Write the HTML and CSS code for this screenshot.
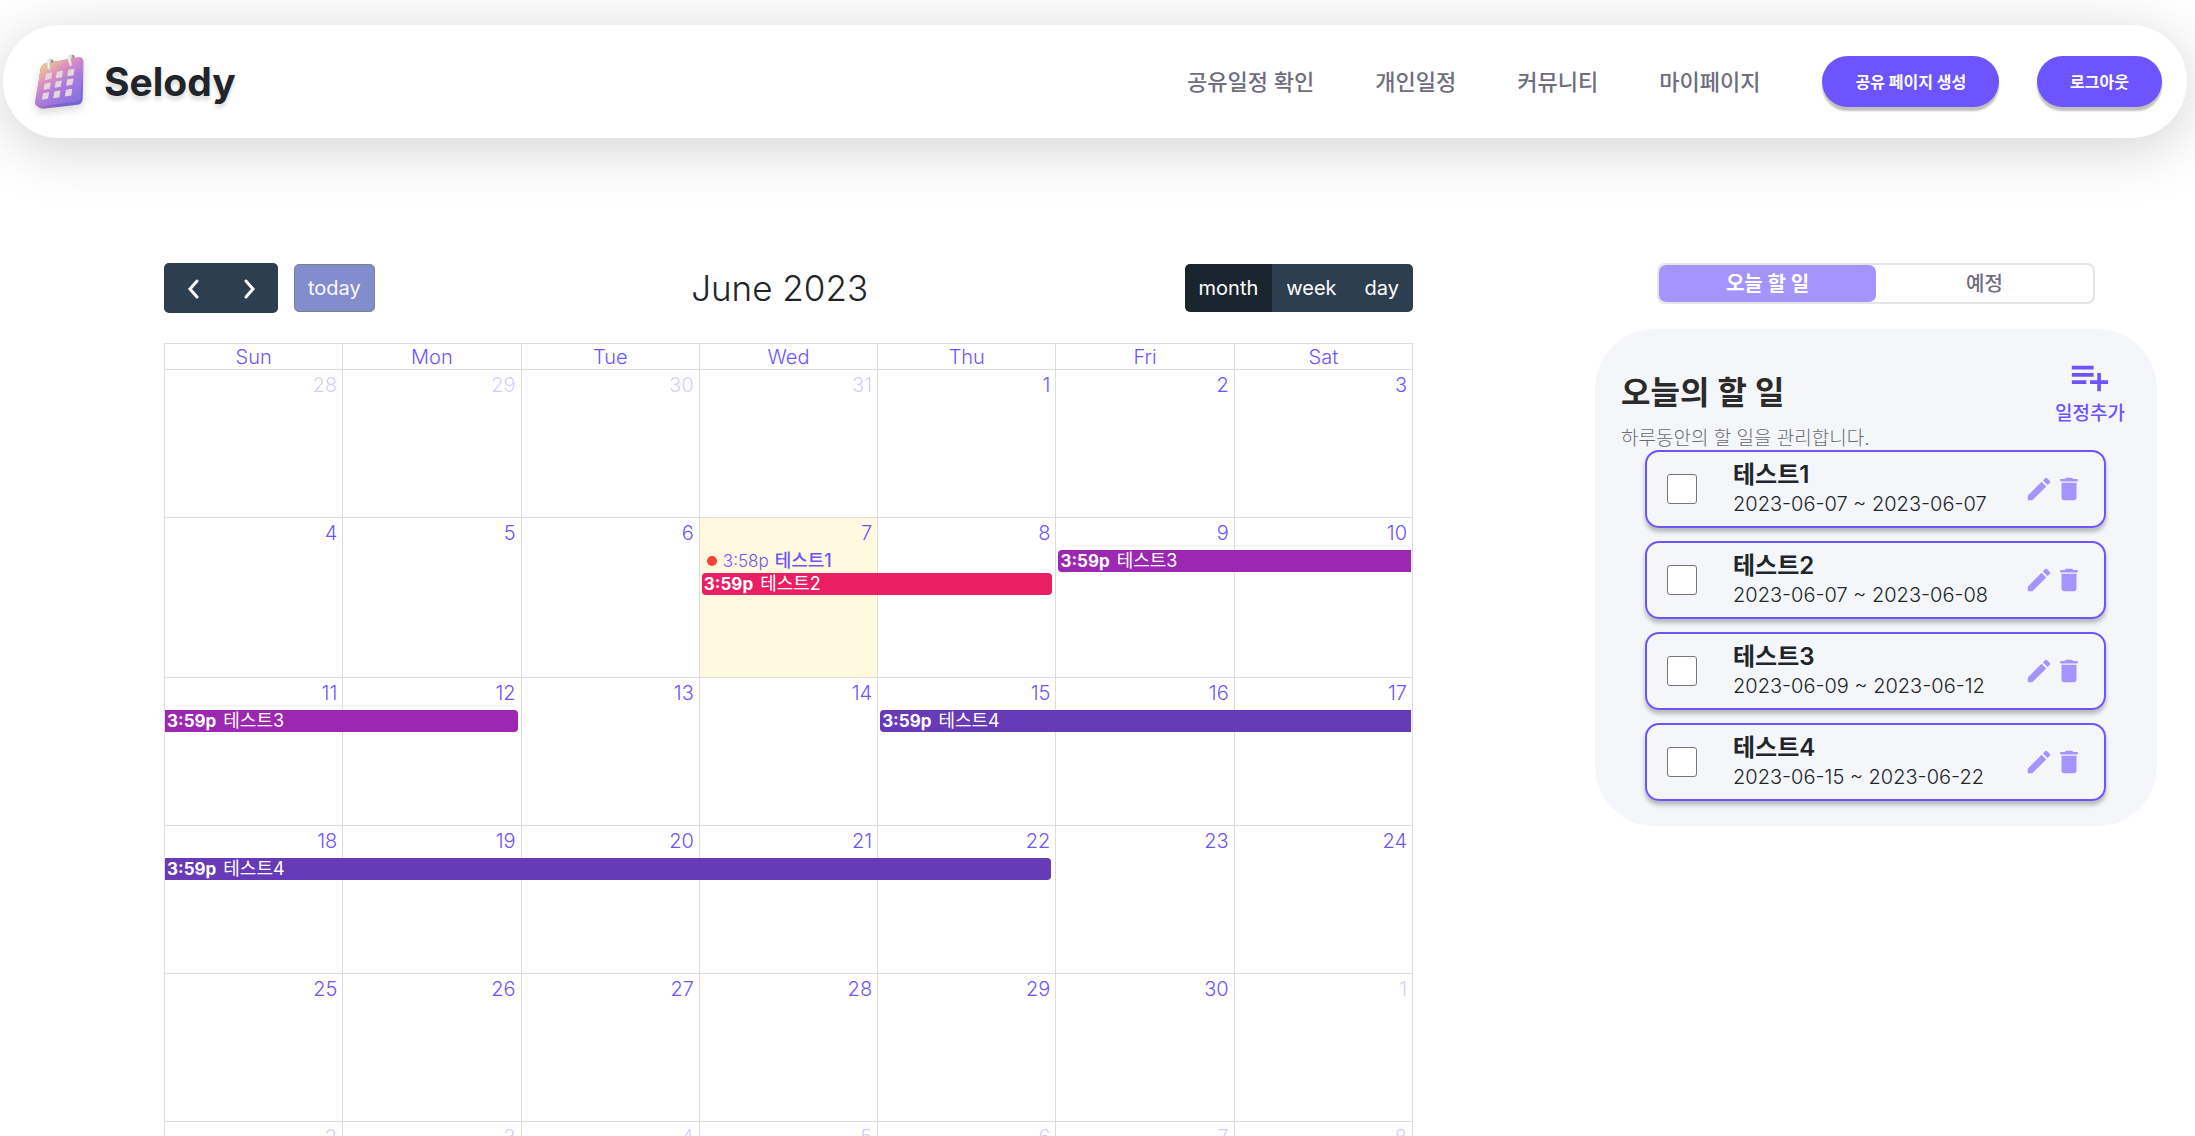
FILE: index.html
```html
<!DOCTYPE html>
<html lang="ko">
<head>
<meta charset="utf-8">
<title>Selody</title>
<meta name="viewport" content="width=device-width, initial-scale=1">
<link rel="stylesheet" href="styles.css">
</head>
<body>
<svg class="sprite" aria-hidden="true">
  <symbol id="icon-edit" viewBox="0 0 24 24"><path d="M3 17.46v3.04c0 .28.22.5.5.5h3.04c.13 0 .26-.05.35-.15L17.81 9.94l-3.75-3.75L3.15 17.1c-.1.1-.15.22-.15.36zM20.71 7.04a.996.996 0 0 0 0-1.41l-2.34-2.34a.996.996 0 0 0-1.41 0l-1.83 1.83 3.75 3.75 1.83-1.83z"/></symbol>
  <symbol id="icon-trash" viewBox="0 0 24 24"><path d="M6 19c0 1.100.9 2 2 2h8c1.100 0 2-.9 2-2V7H6v12zM19 4h-3.500l-1-1h-5l-1 1H5v2h14V4z"/></symbol>
</svg>

<header class="header">
  <a class="brand" href="#">
    <svg class="brand-logo" viewBox="0 0 150 170" aria-hidden="true">
      <defs>
        <linearGradient id="face" x1="0.1" y1="0" x2="0.75" y2="0.9">
          <stop offset="0" stop-color="#f0cf8c"/>
          <stop offset="0.2" stop-color="#ecc094"/>
          <stop offset="0.42" stop-color="#dc8fbf"/>
          <stop offset="0.68" stop-color="#a97bdc"/>
          <stop offset="1" stop-color="#8b74e0"/>
        </linearGradient>
        <linearGradient id="side" x1="0" y1="0.8" x2="1" y2="0.2">
          <stop offset="0" stop-color="#b46bc0"/>
          <stop offset="0.3" stop-color="#7764cc"/>
          <stop offset="0.8" stop-color="#7b62e0"/>
          <stop offset="1" stop-color="#d78ad2"/>
        </linearGradient>
      </defs>
      <path fill="url(#side)" d="M38 30 L134 12 Q149 11 149 26 L146 138 Q145 152 131 155 L28 167 Q14 166 4 153 L20 46 Q23 32 38 30Z"/>
      <path fill="url(#face)" d="M36 30 L132 12 Q145 11 145 25 L141 129 Q140 143 127 146 L19 159 Q1 160 3 145 L20 46 Q22 32 36 30Z"/>
      <g fill="#e4d6da">
        <path d="M36 61l17-3q2 0 1 3l-2 16-18 4q-2 0-1-3zM69 56l16-3q2 0 1 3l-2 16-18 3q-2 0-1-3zM103 50l16-3q3 0 2 3l-2 16-18 3q-2 0-1-3z"/>
        <path d="M32 91l17-3q2 0 1 3l-3 16-17 3q-2 0-1-3zM65 85l17-3q2 0 1 3l-3 16-17 3q-2 0-1-3zM99 79l18-3q2 0 1 3l-3 16-17 3q-2 0-1-3z"/>
        <path d="M27 120l17-3q2 0 1 3l-3 16-17 4q-2 0-1-3zM61 115l17-3q2 0 1 3l-3 17-17 3q-2 0-1-3zM96 110l17-3q2 0 1 3l-2 17-18 3q-2 0-1-3z"/>
      </g>
      <g fill="none" stroke-linecap="round">
        <path stroke="#8d8a8c" stroke-width="8" d="M48 23q4-2 7 2M113 10q3-3 5 1"/>
        <path stroke="#dcd9da" stroke-width="9" d="M48 22q-8 4-3 24M111 9q-9 5-1 25"/>
        <path stroke="#ffffff" stroke-width="3" d="M44 24q-4 6 0 18M107 12q-4 6 0 17"/>
      </g>
    </svg>
    <span class="brand-name">Selody</span>
  </a>
  <nav class="nav">
    <a href="#">공유일정 확인</a>
    <a href="#">개인일정</a>
    <a href="#">커뮤니티</a>
    <a href="#">마이페이지</a>
  </nav>
  <div class="header-actions">
    <button class="pill" type="button">공유 페이지 생성</button>
    <button class="pill" type="button">로그아웃</button>
  </div>
</header>

<main class="main">
  <section class="calendar">
    <div class="toolbar">
      <div class="toolbar-side">
        <div class="btn-group">
          <button class="btn btn-icon" type="button" aria-label="prev"><svg viewBox="0 0 30 30"><path d="M19 8l-7 8 7 8"/></svg></button>
          <button class="btn btn-icon" type="button" aria-label="next"><svg viewBox="0 0 30 30"><path d="M11 8l7 8-7 8"/></svg></button>
        </div>
        <button class="btn btn-today" type="button">today</button>
      </div>
      <h2 class="toolbar-title">June 2023</h2>
      <div class="btn-group">
        <button class="btn btn-active" type="button">month</button>
        <button class="btn" type="button">week</button>
        <button class="btn" type="button">day</button>
      </div>
    </div>
    <table class="month">
      <thead>
        <tr><th>Sun</th><th>Mon</th><th>Tue</th><th>Wed</th><th>Thu</th><th>Fri</th><th>Sat</th></tr>
      </thead>
      <tbody>
        <tr>
          <td class="other"><a href="#">28</a></td><td class="other"><a href="#">29</a></td><td class="other"><a href="#">30</a></td><td class="other"><a href="#">31</a></td><td><a href="#">1</a></td><td><a href="#">2</a></td><td><a href="#">3</a></td>
        </tr>
        <tr class="tall">
          <td><a href="#">4</a></td><td><a href="#">5</a></td><td><a href="#">6</a></td>
          <td class="today"><a href="#">7</a>
            <div class="event dot-event"><i class="dot"></i><span>3:58p</span><b>테스트1</b></div>
            <div class="event bar pink span-2 starts ends"><b>3:59p</b><span>테스트2</span></div>
          </td>
          <td><a href="#">8</a></td>
          <td><a href="#">9</a>
            <div class="event bar purple span-2 starts"><b>3:59p</b><span>테스트3</span></div>
          </td>
          <td><a href="#">10</a></td>
        </tr>
        <tr>
          <td><a href="#">11</a>
            <div class="event bar purple span-2 ends"><b>3:59p</b><span>테스트3</span></div>
          </td>
          <td><a href="#">12</a></td><td><a href="#">13</a></td><td><a href="#">14</a></td>
          <td><a href="#">15</a>
            <div class="event bar deep span-3 starts"><b>3:59p</b><span>테스트4</span></div>
          </td>
          <td><a href="#">16</a></td><td><a href="#">17</a></td>
        </tr>
        <tr>
          <td><a href="#">18</a>
            <div class="event bar deep span-5 ends"><b>3:59p</b><span>테스트4</span></div>
          </td>
          <td><a href="#">19</a></td><td><a href="#">20</a></td><td><a href="#">21</a></td><td><a href="#">22</a></td><td><a href="#">23</a></td><td><a href="#">24</a></td>
        </tr>
        <tr>
          <td><a href="#">25</a></td><td><a href="#">26</a></td><td><a href="#">27</a></td><td><a href="#">28</a></td><td><a href="#">29</a></td><td><a href="#">30</a></td><td class="other"><a href="#">1</a></td>
        </tr>
        <tr>
          <td class="other"><a href="#">2</a></td><td class="other"><a href="#">3</a></td><td class="other"><a href="#">4</a></td><td class="other"><a href="#">5</a></td><td class="other"><a href="#">6</a></td><td class="other"><a href="#">7</a></td><td class="other"><a href="#">8</a></td>
        </tr>
      </tbody>
    </table>
  </section>

  <aside class="side">
    <div class="tabs">
      <button class="tab tab-active" type="button">오늘 할 일</button>
      <button class="tab" type="button">예정</button>
    </div>
    <section class="panel">
      <div class="panel-head">
        <div>
          <h3 class="panel-title">오늘의 할 일</h3>
          <p class="panel-sub">하루동안의 할 일을 관리합니다.</p>
        </div>
        <button class="add" type="button">
          <svg viewBox="1 5 22 16" aria-hidden="true"><path d="M14 10H2v2h12v-2zm0-4H2v2h12V6zm4 8v-4h-2v4h-4v2h4v4h2v-4h4v-2h-4zM2 16h8v-2H2v2z"/></svg>
          일정추가
        </button>
      </div>
      <ul class="todos">
        <li class="todo">
          <input type="checkbox" id="todo-1">
          <label for="todo-1"><strong>테스트1</strong><span>2023-06-07 ~ 2023-06-07</span></label>
          <div class="todo-actions"><button type="button" aria-label="수정"><svg><use href="#icon-edit"/></svg></button><button type="button" aria-label="삭제"><svg><use href="#icon-trash"/></svg></button></div>
        </li>
        <li class="todo">
          <input type="checkbox" id="todo-2">
          <label for="todo-2"><strong>테스트2</strong><span>2023-06-07 ~ 2023-06-08</span></label>
          <div class="todo-actions"><button type="button" aria-label="수정"><svg><use href="#icon-edit"/></svg></button><button type="button" aria-label="삭제"><svg><use href="#icon-trash"/></svg></button></div>
        </li>
        <li class="todo">
          <input type="checkbox" id="todo-3">
          <label for="todo-3"><strong>테스트3</strong><span>2023-06-09 ~ 2023-06-12</span></label>
          <div class="todo-actions"><button type="button" aria-label="수정"><svg><use href="#icon-edit"/></svg></button><button type="button" aria-label="삭제"><svg><use href="#icon-trash"/></svg></button></div>
        </li>
        <li class="todo">
          <input type="checkbox" id="todo-4">
          <label for="todo-4"><strong>테스트4</strong><span>2023-06-15 ~ 2023-06-22</span></label>
          <div class="todo-actions"><button type="button" aria-label="수정"><svg><use href="#icon-edit"/></svg></button><button type="button" aria-label="삭제"><svg><use href="#icon-trash"/></svg></button></div>
        </li>
      </ul>
    </section>
  </aside>
</main>
</body>
</html>
```
FILE: styles.css
```css
:root {
  --primary: #6c55ff;
  --primary-soft: #a594ff;
  --ink: #212529;
  --muted: #6f6d80;
  --line: #dddddd;
  --navy: #2c3e50;
}

*,
*::before,
*::after { box-sizing: border-box; }

body {
  margin: 0;
  background: #fff;
  color: var(--ink);
  font: 300 20px/30px Inter, "Noto Sans CJK KR", sans-serif;
}

a { color: inherit; text-decoration: none; }
button { font: inherit; color: inherit; border: 0; padding: 0; background: none; cursor: pointer; }
h2, h3, p, ul { margin: 0; padding: 0; }
.sprite { display: none; }

/* Header */
.header {
  display: flex;
  align-items: center;
  margin: 25px 8px 0 3px;
  padding: 0 25px 0 31px;
  height: 113px;
  border-radius: 60px;
  background: #fff;
  box-shadow: 0 10px 60px rgba(0, 0, 0, 0.18);
}
.brand { display: flex; align-items: center; gap: 20px; margin-right: auto; }
.brand-logo { width: 50px; height: 57px; filter: drop-shadow(0 4px 4px rgba(0, 0, 0, 0.15)); }
.brand-name { font-size: 39px; line-height: 48px; font-weight: 700; text-shadow: 0 4px 4px rgba(0, 0, 0, 0.15); }
.nav { display: flex; gap: 61px; margin-right: 62px; color: var(--muted); font-size: 22px; line-height: 28px; font-weight: 500; }
.header-actions { display: flex; gap: 38px; }
.pill {
  height: 51px;
  padding: 0 33px;
  border-radius: 26px;
  background: var(--primary);
  color: #fff;
  font-size: 16px;
  line-height: 24px;
  font-weight: 700;
  box-shadow: 0 4px 2px rgba(0, 0, 0, 0.25);
}

/* Page columns */
.main {
  display: grid;
  grid-template-columns: minmax(0, 1fr) 562px;
  gap: 182px;
  align-items: start;
  padding: 125px 38px 40px 164px;
}

/* Calendar toolbar */
.toolbar { display: flex; align-items: center; justify-content: space-between; margin-bottom: 30px; }
.toolbar-side { display: flex; align-items: center; gap: 16px; }
.toolbar-title { font-size: 35px; line-height: 42px; font-weight: 300; }
.btn-group { display: flex; border-radius: 5px; overflow: hidden; }
.btn { height: 48px; padding: 0 14px; background: var(--navy); color: #fff; font-weight: 400; }
.btn-icon { display: grid; place-items: center; width: 57px; height: 50px; }
.btn-icon svg { width: 30px; height: 30px; fill: none; stroke: #fff; stroke-width: 3; stroke-linecap: round; }
.btn-active { background: #1a252f; }
.btn-today { padding: 0 13px; border: 1px solid #76838f; border-radius: 5px; background: #828dce; color: #f8f8fc; }

/* Month table */
.month { width: 100%; table-layout: fixed; border-collapse: collapse; color: var(--primary); }
.month th, .month td { border: 1px solid var(--line); padding: 0; }
.month th { height: 26px; line-height: 24px; font-weight: 300; }
.month td { height: 148px; vertical-align: top; }
.month .tall td { height: 160px; }
.month td > a { display: block; padding: 3px 5px 5px 0; line-height: 24px; text-align: right; }
.month .other > a { opacity: 0.3; }
.month .today { background: #fffadf; }

.event { position: relative; z-index: 1; display: flex; align-items: center; height: 22px; margin-bottom: 1px; font-size: 17px; line-height: 22px; white-space: nowrap; }
.dot-event { gap: 6px; padding-left: 7px; }
.dot-event b { font-size: 18px; font-weight: 500; }
.dot { width: 10px; height: 10px; border-radius: 50%; background: #f44336; }
.bar { gap: 7px; padding-left: 2px; color: #fff; font-weight: 400; }
.bar b { font-weight: 700; }
.bar span { font-size: 18px; }
.bar.starts { margin-left: 2px; border-radius: 4px 0 0 4px; }
.bar.ends { border-radius: 0 4px 4px 0; }
.bar.starts.ends { border-radius: 4px; }
.span-2 { width: calc(200% - 2px); }
.span-2.starts.ends { width: calc(200% - 4px); }
.span-3 { width: calc(300% - 1px); }
.span-5 { width: 500%; }
.pink { background: #e91e63; }
.purple { background: #9c27b0; }
.deep { background: #673ab7; }

/* To-do column */
.tabs { display: flex; width: 438px; margin: 0 auto 25px; border: 2px solid #e5e5e5; border-radius: 8px; }
.tab { flex: 1; height: 37px; border-radius: 7px; color: var(--muted); font-weight: 500; }
.tab-active { background: var(--primary-soft); color: #fff; font-weight: 700; }

.panel { padding: 35px 26px 25px; border-radius: 60px; background: #f4f6f9; }
.panel-head { display: flex; justify-content: space-between; align-items: flex-start; }
.panel-title { padding-top: 7px; font-size: 32px; line-height: 44px; font-weight: 600; color: #2b2b2b; }
.panel-sub { padding-top: 13px; font-size: 19px; line-height: 22px; color: #6b6b6b; }
.add { display: flex; flex-direction: column; align-items: center; gap: 8px; padding-right: 6px; color: var(--primary); font-size: 19px; line-height: 26px; font-weight: 500; }
.add svg { width: 40px; height: 29px; fill: currentColor; }

.todos { display: grid; gap: 13px; padding: 0 25px 0 24px; list-style: none; }
.todo {
  display: flex;
  align-items: center;
  height: 78px;
  padding: 0 20px;
  border: 2px solid var(--primary);
  border-radius: 14px;
  box-shadow: 0 4px 4px rgba(0, 0, 0, 0.25);
}
.todo input { width: 30px; height: 30px; margin: 0; appearance: none; border: 1px solid #767676; border-radius: 3px; background: #fff; }
.todo label { display: flex; flex-direction: column; margin: 0 auto 0 36px; }
.todo strong { font-size: 24px; line-height: 30px; font-weight: 600; }
.todo label span { font-size: 20px; line-height: 28px; }
.todo-actions { display: flex; }
.todo-actions button, .todo-actions svg { display: block; width: 30px; height: 30px; fill: var(--primary-soft); }
```
